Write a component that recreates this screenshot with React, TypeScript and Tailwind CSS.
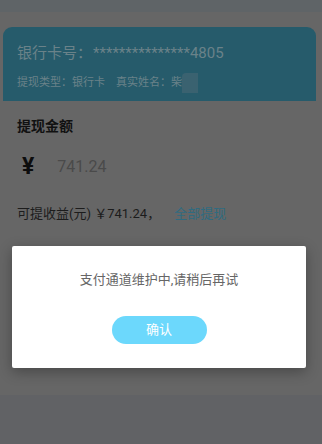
import React from "react";

const font = { fontFamily: 'Roboto, "Noto Sans CJK SC", "Noto Sans", sans-serif' };

const App = (): JSX.Element => {
  return (
    <div className="relative w-[322px] h-[444px] overflow-hidden bg-[#616265]" style={font}>
      <div className="h-[12px] bg-[#5f6467]" />
      <div className="bg-[#666666] pt-[15px] h-[383px]">
        <div className="ml-[3px] w-[313px] h-[74px] rounded-t-[9px] bg-[#265b6b] px-[14px] pt-[14px]">
          <div className="flex items-center text-[15px] leading-[24px] text-[#6a8289]">
            <span>银行卡号：</span>
            <span className="ml-[1px]">***************4805</span>
          </div>
          <div className="mt-[8px] flex items-center text-[11px] leading-[20px] text-[#6a8289]">
            <span>提现类型：</span>
            <span>银行卡</span>
            <span className="ml-[11px]">真实姓名：</span>
            <span>柴</span>
            <span className="w-[16px] h-[20px] bg-[#3a6270] rounded-tl-[4px]" />
          </div>
        </div>
        <div className="px-[17px]">
          <div className="mt-[15px] text-[14px] leading-[20px] font-bold text-[#111111]">提现金额</div>
          <div className="mt-[18px] flex items-center h-[26px]">
            <span className="ml-[5px] text-[23px] font-bold text-[#0d0d0d] leading-[26px]">¥</span>
            <span className="ml-[23px] text-[16px] text-[#4a4a4a]">741.24</span>
          </div>
          <div className="mt-[25px] flex items-center text-[13px] leading-[18px]">
            <span className="text-[#1c1c1c]">可提收益(元) ￥741.24，</span>
            <span className="ml-[14px] text-[#2f6b80]">全部提现</span>
          </div>
        </div>
      </div>
      <div className="absolute left-[12px] top-[246px] w-[294px] h-[122px] bg-white rounded-[2px] shadow-[0_4px_14px_rgba(0,0,0,0.3)] flex flex-col items-center">
        <div className="mt-[24px] text-[13px] leading-[20px] text-[#666666]">支付通道维护中,请稍后再试</div>
        <button className="mt-[26px] w-[95px] h-[28px] rounded-full bg-[#6cd8fc] text-white text-[13px]">确认</button>
      </div>
    </div>
  );
};

export default App;
